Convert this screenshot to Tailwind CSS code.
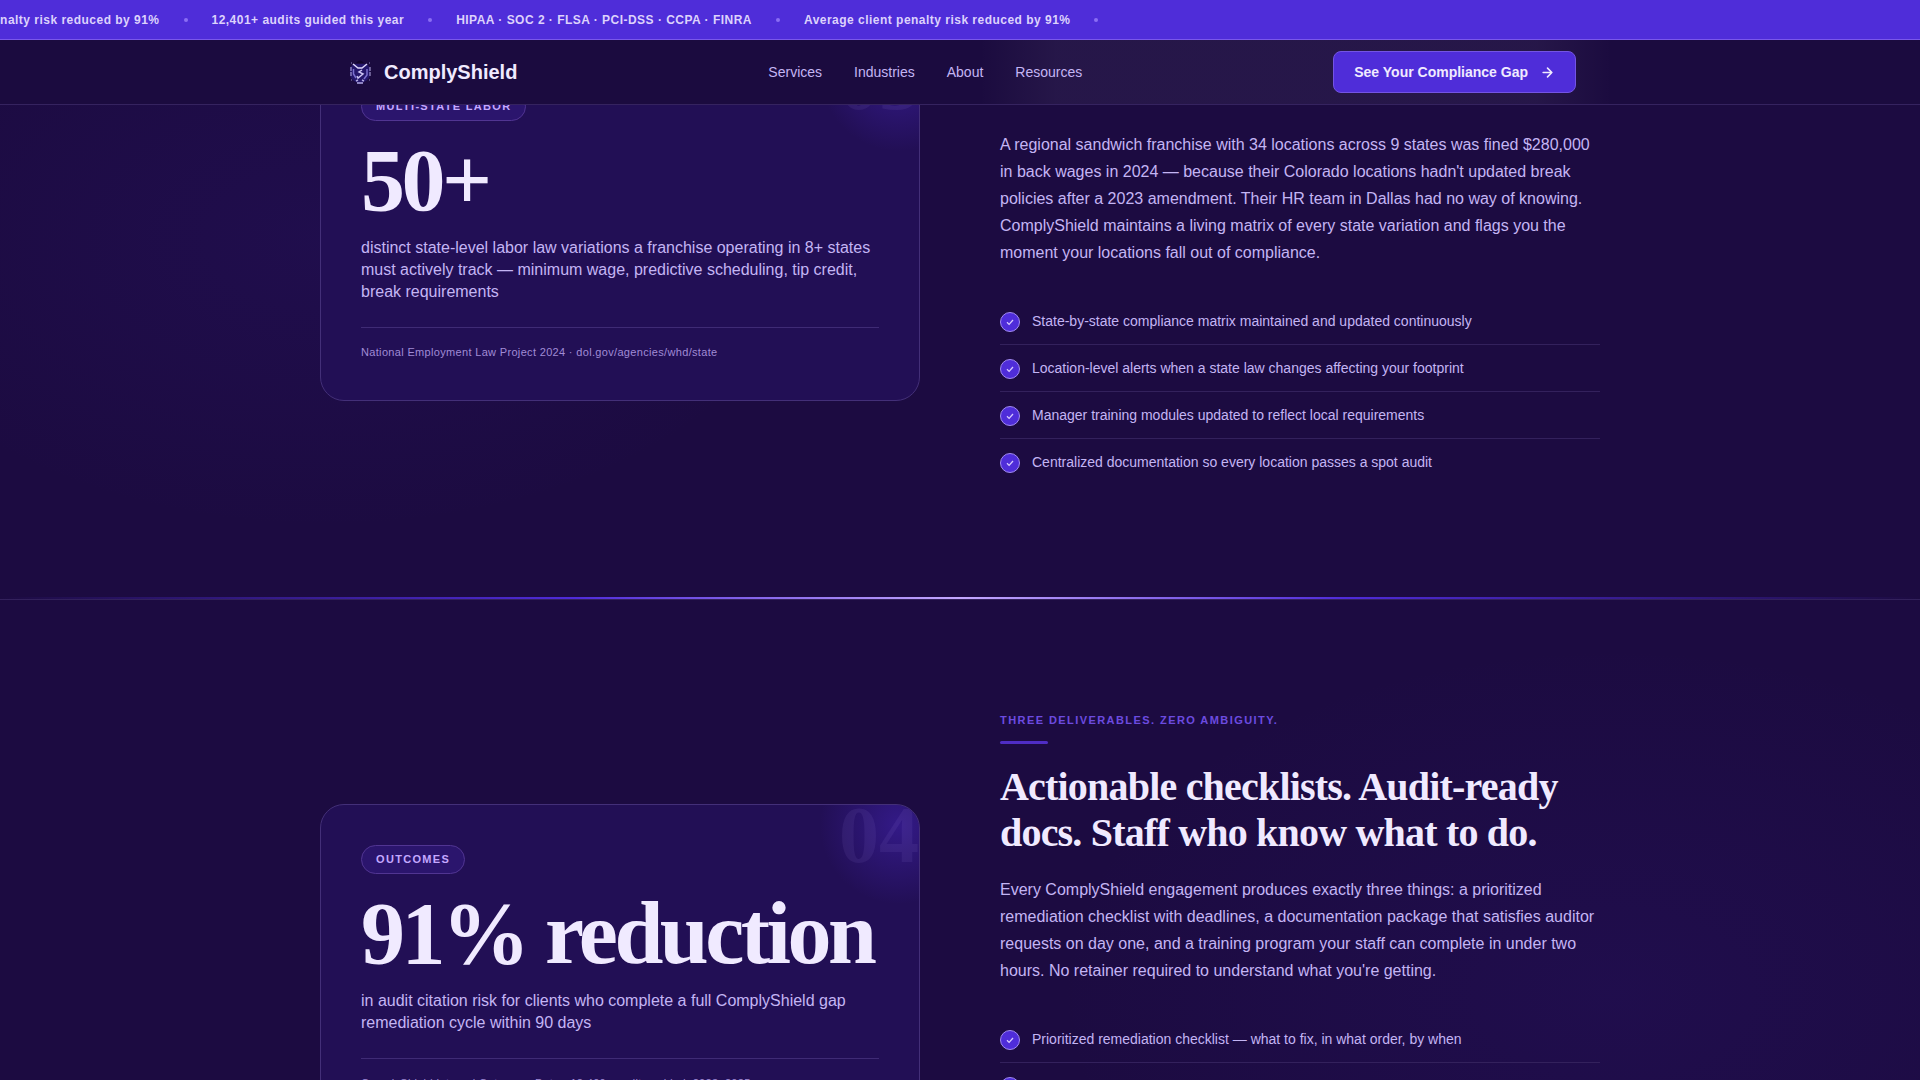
<!DOCTYPE html>
<html lang="en">
<head>
    <meta charset="UTF-8">
    <meta name="viewport" content="width=device-width, initial-scale=1.0">
    <title>ComplyShield</title>
    <!-- Tailwind CSS CDN -->
    <script src="https://cdn.jsdelivr.net/npm/@tailwindcss/browser@4"></script>
    <style>
        body {
            font-family: 'Liberation Sans', Arial, sans-serif;
        }
        /* Soft purple glows behind the sections */
        .page-glow {
            background:
                radial-gradient(ellipse 700px 420px at 17% 22%, rgba(79, 43, 217, 0.08), transparent 70%),
                radial-gradient(ellipse 800px 500px at 84% 92%, rgba(79, 43, 217, 0.08), transparent 70%);
        }
        /* Light haze over the right half of the bar */
        .nav-haze {
            background: linear-gradient(90deg, transparent 51%, rgba(240, 234, 255, 0.05) 55%, rgba(240, 234, 255, 0.05) 80%, transparent 84%);
        }
        .card-glow {
            background: radial-gradient(circle, rgba(79, 43, 217, 0.38), transparent 70%);
        }
        .divider {
            background: linear-gradient(90deg, transparent 0%, #4f2bd9 30%, #c4a8ff 50%, #4f2bd9 70%, transparent 100%);
        }
    </style>
</head>
<body class="bg-[#1c0b41] text-[#c4b5f4]">
    <!-- Ticker and navigation -->
    <header class="fixed inset-x-0 top-0 z-20 bg-[#1b0b3f]">
        <div class="h-10 overflow-hidden bg-[#4f2dd9] border-b border-[#7a58ea]">
            <div class="-ml-[107px] flex h-full w-max items-center gap-6 text-xs font-bold tracking-[0.04em] whitespace-nowrap text-[#ddd2fc]">
                <span>Average client penalty risk reduced by 91%</span>
                <span class="size-1 rounded-full bg-[#8b6df5]"></span>
                <span>12,401+ audits guided this year</span>
                <span class="size-1 rounded-full bg-[#8b6df5]"></span>
                <span>HIPAA · SOC 2 · FLSA · PCI-DSS · CCPA · FINRA</span>
                <span class="size-1 rounded-full bg-[#8b6df5]"></span>
                <span>Average client penalty risk reduced by 91%</span>
                <span class="size-1 rounded-full bg-[#8b6df5]"></span>
            </div>
        </div>
        <nav class="nav-haze border-b border-[#35235f]">
            <div class="mx-auto flex h-16 max-w-7xl items-center justify-between px-6">
                <a href="#" class="flex items-center gap-3 text-xl font-bold text-[#f0eaff]">
                    <svg class="size-7" viewBox="0 0 28 28" fill="none">
                        <path d="M12 5 Q16 0 20 5" fill="#12062c"/>
                        <path d="M9 6 H23 L26 10 V16 C26 21 21 24 16 26 C11 24 6 21 6 16 V10 Z" fill="#24166b"/>
                        <path d="M7 9 V19 M26 9 V19" stroke="#b9b0e6" stroke-width="1" stroke-dasharray="4 1"/>
                        <path d="M9 6 L14 10 L18 10 L23 6" stroke="#ddd6fb" stroke-width="1.5"/>
                        <path d="M9.500 11 V16 L12 20 M23 11 V17 L20 21" stroke="#7b70cf" stroke-width="1.500"/>
                        <path d="M18 12 L15 14 L19 16 L14 20 L13 18" stroke="#cbc3f2" stroke-width="1.500"/>
                        <path d="M12 23 L14 22 M13 25 H19 M20 23 L18 22" stroke="#b1a8e2" stroke-width="1.500"/>
                        <path d="M7 5 h1 M25 5 h1 M7 22 h1 M25 22 h1" stroke="#8f86c0" stroke-width="1"/>
                    </svg>
                    ComplyShield
                </a>
                <div class="flex items-center gap-8 text-sm">
                    <a href="#">Services</a>
                    <a href="#">Industries</a>
                    <a href="#">About</a>
                    <a href="#">Resources</a>
                </div>
                <button class="flex h-[42px] items-center gap-3 rounded-lg border border-[#7454e3] bg-[#4f2dd9] px-5 text-sm font-bold text-[#f0eaff]">
                    See Your Compliance Gap
                    <svg class="size-[15px]" viewBox="0 0 24 24" fill="none" stroke="currentColor" stroke-width="2.5" stroke-linecap="round" stroke-linejoin="round">
                        <path d="M5 12h14M12 5l7 7-7 7"/>
                    </svg>
                </button>
            </div>
        </nav>
    </header>

    <div class="page-glow relative h-screen overflow-hidden">
        <main class="-mt-[145px]">
            <!-- Multi-state labor -->
            <section class="py-28">
                <div class="mx-auto grid max-w-7xl grid-cols-2 items-center gap-20">
                    <div class="relative overflow-hidden rounded-3xl border border-[#432f78] bg-[#220f55] p-10">
                        <div class="card-glow absolute -top-15 -right-15 size-40 rounded-full"></div>
                        <span class="absolute -top-2.5 right-0 font-['Liberation_Serif',serif] text-[80px] leading-none font-bold text-[#c4a8ff]/8">03</span>
                        <span class="block w-fit rounded-full border border-[#513592] bg-[#2b156d] px-3.5 py-[5px] text-[11px] leading-[17px] font-bold tracking-[0.12em] text-[#c4a8ff]">MULTI-STATE LABOR</span>
                        <p class="mt-4 font-['Liberation_Serif',serif] text-[88px] leading-none font-bold tracking-[-0.04em] text-[#f0eaff]">50+</p>
                        <p class="mt-3 leading-[22px]">distinct state-level labor law variations a franchise operating in 8+ states must actively track — minimum wage, predictive scheduling, tip credit, break requirements</p>
                        <p class="mt-6 border-t border-[#3f2b75] pt-4 text-[11px] leading-4 tracking-[0.03em] text-[#a08bd6]">National Employment Law Project 2024 · dol.gov/agencies/whd/state</p>
                    </div>
                    <div>
                        <p class="text-[11px] leading-[17px] font-bold tracking-[0.13em] text-[#6c4be0]">NINE STATES. NINE RULEBOOKS.</p>
                        <div class="mt-3 h-[3px] w-12 rounded-full bg-[#4f2dc4]"></div>
                        <h2 class="mt-5 font-['Liberation_Serif',serif] text-[40px] leading-[46px] font-bold tracking-[-0.02em] text-[#f0eaff]">What is normal in one state is a violation in the next one over.</h2>
                        <p class="mt-5 leading-[27px]">A regional sandwich franchise with 34 locations across 9 states was fined $280,000 in back wages in 2024 — because their Colorado locations hadn't updated break policies after a 2023 amendment. Their HR team in Dallas had no way of knowing. ComplyShield maintains a living matrix of every state variation and flags you the moment your locations fall out of compliance.</p>
                        <ul class="mt-8 divide-y divide-[#33215c] text-sm leading-[22px]">
                            <li class="flex gap-3 py-3">
                                <svg class="mt-0.5 size-5 shrink-0" viewBox="0 0 20 20" fill="none"><circle cx="10" cy="10" r="9.5" fill="#4f2dd9" stroke="#a28bf2"/><path d="M7 10.3l2.1 2.1L13 8" stroke="#d6c8ff" stroke-width="1.3"/></svg>
                                State-by-state compliance matrix maintained and updated continuously
                            </li>
                            <li class="flex gap-3 py-3">
                                <svg class="mt-0.5 size-5 shrink-0" viewBox="0 0 20 20" fill="none"><circle cx="10" cy="10" r="9.5" fill="#4f2dd9" stroke="#a28bf2"/><path d="M7 10.3l2.1 2.1L13 8" stroke="#d6c8ff" stroke-width="1.3"/></svg>
                                Location-level alerts when a state law changes affecting your footprint
                            </li>
                            <li class="flex gap-3 py-3">
                                <svg class="mt-0.5 size-5 shrink-0" viewBox="0 0 20 20" fill="none"><circle cx="10" cy="10" r="9.5" fill="#4f2dd9" stroke="#a28bf2"/><path d="M7 10.3l2.1 2.1L13 8" stroke="#d6c8ff" stroke-width="1.3"/></svg>
                                Manager training modules updated to reflect local requirements
                            </li>
                            <li class="flex gap-3 py-3">
                                <svg class="mt-0.5 size-5 shrink-0" viewBox="0 0 20 20" fill="none"><circle cx="10" cy="10" r="9.5" fill="#4f2dd9" stroke="#a28bf2"/><path d="M7 10.3l2.1 2.1L13 8" stroke="#d6c8ff" stroke-width="1.3"/></svg>
                                Centralized documentation so every location passes a spot audit
                            </li>
                        </ul>
                    </div>
                </div>
            </section>

            <div class="divider h-0.5"></div>

            <!-- Outcomes -->
            <section class="border-t border-[#33215c] py-28">
                <div class="mx-auto grid max-w-7xl grid-cols-2 items-center gap-20">
                    <div class="relative overflow-hidden rounded-3xl border border-[#432f78] bg-[#220f55] p-10">
                        <div class="card-glow absolute -top-15 -right-15 size-40 rounded-full"></div>
                        <span class="absolute -top-2.5 right-0 font-['Liberation_Serif',serif] text-[80px] leading-none font-bold text-[#c4a8ff]/8">04</span>
                        <span class="block w-fit rounded-full border border-[#513592] bg-[#2b156d] px-3.5 py-[5px] text-[11px] leading-[17px] font-bold tracking-[0.12em] text-[#c4a8ff]">OUTCOMES</span>
                        <p class="mt-4 font-['Liberation_Serif',serif] text-[88px] leading-none font-bold tracking-[-0.04em] whitespace-nowrap text-[#f0eaff]">91% reduction</p>
                        <p class="mt-3 leading-[22px]">in audit citation risk for clients who complete a full ComplyShield gap remediation cycle within 90 days</p>
                        <p class="mt-6 border-t border-[#3f2b75] pt-4 text-[11px] leading-4 tracking-[0.03em] text-[#a08bd6]">ComplyShield Internal Outcomes Data · 12,400+ audits guided, 2023–2025</p>
                    </div>
                    <div>
                        <p class="text-[11px] leading-[17px] font-bold tracking-[0.13em] text-[#6c4be0]">THREE DELIVERABLES. ZERO AMBIGUITY.</p>
                        <div class="mt-3 h-[3px] w-12 rounded-full bg-[#4f2dc4]"></div>
                        <h2 class="mt-5 font-['Liberation_Serif',serif] text-[40px] leading-[46px] font-bold tracking-[-0.02em] text-[#f0eaff]">Actionable checklists. Audit-ready docs. Staff who know what to do.</h2>
                        <p class="mt-5 leading-[27px]">Every ComplyShield engagement produces exactly three things: a prioritized remediation checklist with deadlines, a documentation package that satisfies auditor requests on day one, and a training program your staff can complete in under two hours. No retainer required to understand what you're getting.</p>
                        <ul class="mt-8 divide-y divide-[#33215c] pb-5 text-sm leading-[22px]">
                            <li class="flex gap-3 py-3">
                                <svg class="mt-0.5 size-5 shrink-0" viewBox="0 0 20 20" fill="none"><circle cx="10" cy="10" r="9.5" fill="#4f2dd9" stroke="#a28bf2"/><path d="M7 10.3l2.1 2.1L13 8" stroke="#d6c8ff" stroke-width="1.3"/></svg>
                                Prioritized remediation checklist — what to fix, in what order, by when
                            </li>
                            <li class="flex gap-3 py-3">
                                <svg class="mt-0.5 size-5 shrink-0" viewBox="0 0 20 20" fill="none"><circle cx="10" cy="10" r="9.5" fill="#4f2dd9" stroke="#a28bf2"/><path d="M7 10.3l2.1 2.1L13 8" stroke="#d6c8ff" stroke-width="1.3"/></svg>
                                Documentation package assembled and formatted for auditors
                            </li>
                            <li class="flex gap-3 py-3">
                                <svg class="mt-0.5 size-5 shrink-0" viewBox="0 0 20 20" fill="none"><circle cx="10" cy="10" r="9.5" fill="#4f2dd9" stroke="#a28bf2"/><path d="M7 10.3l2.1 2.1L13 8" stroke="#d6c8ff" stroke-width="1.3"/></svg>
                                Staff training program with completion tracking for every role
                            </li>
                            <li class="flex gap-3 py-3">
                                <svg class="mt-0.5 size-5 shrink-0" viewBox="0 0 20 20" fill="none"><circle cx="10" cy="10" r="9.5" fill="#4f2dd9" stroke="#a28bf2"/><path d="M7 10.3l2.1 2.1L13 8" stroke="#d6c8ff" stroke-width="1.3"/></svg>
                                Follow-up review 90 days after delivery
                            </li>
                        </ul>
                    </div>
                </div>
            </section>
        </main>
    </div>
</body>
</html>
